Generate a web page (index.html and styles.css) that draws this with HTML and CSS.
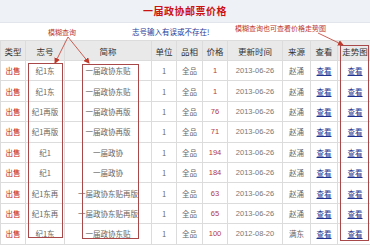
FILE: index.html
```html
<!DOCTYPE html>
<html lang="zh-CN">
<head>
    <meta charset="UTF-8">
    <title>一届政协邮票价格</title>
    <link rel="stylesheet" href="styles.css">
</head>
<body>

    <div class="page">
        <div class="title-bar">
            <h1>一届政协邮票价格</h1>
        </div>

        <div class="notice">志号输入有误或不存在!</div>

        <table class="price-table">
            <colgroup>
                <col class="c-type">
                <col class="c-code">
                <col class="c-name">
                <col class="c-unit">
                <col class="c-grade">
                <col class="c-price">
                <col class="c-date">
                <col class="c-src">
                <col class="c-view">
                <col class="c-trend">
            </colgroup>
            <thead>
                <tr>
                    <th>类型</th><th>志号</th><th>简称</th><th>单位</th><th>品相</th>
                    <th>价格</th><th>更新时间</th><th>来源</th><th>查看</th><th>走势图</th>
                </tr>
            </thead>
            <tbody>
                <tr><td class="sell">出售</td><td>纪1东</td><td>一届政协东贴</td><td>1</td><td>全品</td><td class="price">1</td><td class="date">2013-06-26</td><td>赵涌</td><td><a href="#">查看</a></td><td><a href="#">查看</a></td></tr>
                <tr><td class="sell">出售</td><td>纪1东</td><td>一届政协东贴</td><td>1</td><td>全品</td><td class="price">1</td><td class="date">2013-06-26</td><td>赵涌</td><td><a href="#">查看</a></td><td><a href="#">查看</a></td></tr>
                <tr><td class="sell">出售</td><td>纪1再版</td><td>一届政协再版</td><td>1</td><td>全品</td><td class="price">76</td><td class="date">2013-06-26</td><td>赵涌</td><td><a href="#">查看</a></td><td><a href="#">查看</a></td></tr>
                <tr><td class="sell">出售</td><td>纪1再版</td><td>一届政协再版</td><td>1</td><td>全品</td><td class="price">71</td><td class="date">2013-06-26</td><td>赵涌</td><td><a href="#">查看</a></td><td><a href="#">查看</a></td></tr>
                <tr><td class="sell">出售</td><td>纪1</td><td>一届政协</td><td>1</td><td>全品</td><td class="price">194</td><td class="date">2013-06-26</td><td>赵涌</td><td><a href="#">查看</a></td><td><a href="#">查看</a></td></tr>
                <tr><td class="sell">出售</td><td>纪1</td><td>一届政协</td><td>1</td><td>全品</td><td class="price">184</td><td class="date">2013-06-26</td><td>赵涌</td><td><a href="#">查看</a></td><td><a href="#">查看</a></td></tr>
                <tr><td class="sell">出售</td><td>纪1东再</td><td>一届政协东贴再版</td><td>1</td><td>全品</td><td class="price">63</td><td class="date">2013-06-26</td><td>赵涌</td><td><a href="#">查看</a></td><td><a href="#">查看</a></td></tr>
                <tr><td class="sell">出售</td><td>纪1东再</td><td>一届政协东贴再版</td><td>1</td><td>全品</td><td class="price">65</td><td class="date">2013-06-26</td><td>赵涌</td><td><a href="#">查看</a></td><td><a href="#">查看</a></td></tr>
                <tr><td class="sell">出售</td><td>纪1东</td><td>一届政协东贴</td><td>1</td><td>全品</td><td class="price">100</td><td class="date">2012-08-20</td><td>满东</td><td><a href="#">查看</a></td><td><a href="#">查看</a></td></tr>
            </tbody>
        </table>

        <!-- hand-drawn annotations laid over the table -->
        <svg class="notes" width="370" height="247" viewBox="0 0 370 247">
            <defs>
                <marker id="tip" markerWidth="6" markerHeight="6" refX="5" refY="3" orient="auto" markerUnits="userSpaceOnUse">
                    <path d="M0,0 L6,3 L0,6 Z" fill="#c0392b"/>
                </marker>
            </defs>
            <text x="48" y="35" class="note-text">模糊查询</text>
            <text x="235" y="31" class="note-text">模糊查询也可查看价格走势图</text>
            <line x1="68" y1="37" x2="55" y2="63" marker-end="url(#tip)"/>
            <line x1="68" y1="37" x2="89" y2="63" marker-end="url(#tip)"/>
            <line x1="318" y1="33" x2="343" y2="45" marker-end="url(#tip)"/>
            <rect x="28.5" y="63.5" width="34" height="174"/>
            <rect x="82.5" y="64.5" width="56" height="174"/>
            <rect x="340.5" y="45.5" width="28" height="195"/>
        </svg>
    </div>

</body>
</html>
```

FILE: styles.css
```css
body {
    margin: 0;
    padding: 0;
    background: #fff;
    font-family: "Noto Sans CJK SC", "Liberation Sans", sans-serif;
    color: #555;
}

.page {
    position: relative;
    width: 370px;
    height: 247px;
    overflow: hidden;
}

.title-bar {
    height: 22px;
    background-color: #eef2f7;
    border-bottom: 1px solid #e2e6ec;
    display: flex;
    align-items: center;
    justify-content: center;
}

.title-bar h1 {
    margin: 0;
    font-size: 10px;
    line-height: 1;
    font-weight: bold;
    color: #cc1111;
    letter-spacing: 0.5px;
}

.notice {
    height: 17px;
    display: flex;
    align-items: center;
    padding-left: 132px;
    font-size: 7.5px;
    color: #1f3c99;
}

/* --- Price table --- */
.price-table {
    border-collapse: collapse;
    table-layout: fixed;
    width: 372px;
    text-align: center;
}

.c-type  { width: 25px; }
.c-code  { width: 39px; }
.c-name  { width: 87px; }
.c-unit  { width: 25px; }
.c-grade { width: 26px; }
.c-price { width: 25px; }
.c-date  { width: 55px; }
.c-src   { width: 28px; }
.c-view  { width: 27px; }
.c-trend { width: 35px; }

.price-table th,
.price-table td {
    border: 1px solid #dcdcdc;
    padding: 0;
    white-space: nowrap;
    overflow: visible;
}

.price-table th {
    height: 19px;
    background-color: #e9e9e9;
    color: #333;
    font-size: 8.5px;
    font-weight: normal;
}

.price-table td {
    height: 19.4px;
    font-size: 7.5px;
    color: #666;
}

.price-table td.sell {
    color: #c01818;
}

.price-table td.price {
    color: #b33a3a;
    font-family: "Liberation Sans", sans-serif;
}

.price-table td.date {
    font-family: "Liberation Sans", sans-serif;
    color: #777;
}

.price-table a {
    color: #22338f;
    text-decoration: underline;
}

/* --- Annotation overlay --- */
.notes {
    position: absolute;
    top: 0;
    left: 0;
    pointer-events: none;
}

.notes line {
    stroke: #c0392b;
    stroke-width: 0.8;
}

.notes rect {
    fill: none;
    stroke: #a84848;
    stroke-width: 1;
}

.note-text {
    font-family: "Noto Sans CJK SC", sans-serif;
    font-size: 7px;
    fill: #c0392b;
}
```
